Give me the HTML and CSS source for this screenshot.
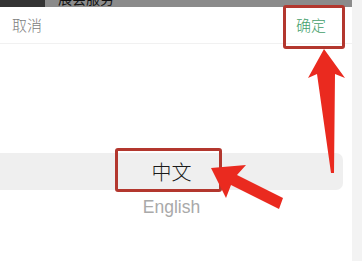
FILE: index.html
```html
<!DOCTYPE html>
<html lang="zh">
<head>
<meta charset="utf-8">
<link rel="stylesheet" href="styles.css">
</head>
<body>
<div class="page">
  <div class="main">
    <div class="topstrip">
      <div class="topstrip-dark"></div>
      <div class="topstrip-title">展会服务</div>
    </div>
    <div class="header">
      <span class="btn cancel">取消</span>
      <span class="btn ok">确定</span>
    </div>
    <div class="picker">
      <div class="band">中文</div>
      <div class="option">English</div>
    </div>
  </div>
  <div class="side"></div>

  <div class="mark mark-ok"></div>
  <div class="mark mark-zh"></div>
  <svg class="arrows" width="362" height="261" viewBox="0 0 362 261">
    <polygon points="324,49 345,78 335,74 334,173 331,173 317,74 308,78" fill="#ea2a1f"/>
    <polygon points="211,168 246,165 237,175 283,198 279,209 231,185 226,198" fill="#ea2a1f"/>
  </svg>
</div>
</body>
</html>
```
FILE: styles.css
```css
html, body {
  margin: 0;
  padding: 0;
  background: #ffffff;
}
.page {
  position: relative;
  width: 362px;
  height: 261px;
  overflow: hidden;
  display: flex;
  font-family: "Noto Sans CJK SC", "Liberation Sans", sans-serif;
}
.main {
  width: 352px;
  display: flex;
  flex-direction: column;
  background: #ffffff;
}
.side {
  width: 10px;
  background: #f3f3f3;
}
.topstrip {
  height: 7px;
  background: #8b8b8b;
  display: flex;
  overflow: hidden;
}
.topstrip-dark {
  width: 45px;
  background: #343434;
}
.topstrip-title {
  margin-left: 13px;
  margin-top: -9px;
  font-size: 14px;
  line-height: 14px;
  color: #111;
}
.header {
  height: 36px;
  border-bottom: 1px solid #f1f1f1;
  display: flex;
  align-items: center;
  justify-content: space-between;
  padding: 0 26px 0 12px;
}
.btn {
  font-size: 15px;
  line-height: 20px;
  font-weight: 300;
}
.cancel {
  color: #7d7d7d;
}
.ok {
  color: #45a06a;
}
.picker {
  padding-top: 109px;
  width: 343px;
}
.band {
  height: 37px;
  background: #efefef;
  border-radius: 0 7px 7px 0;
  display: flex;
  align-items: center;
  justify-content: center;
  font-size: 20px;
  font-weight: 300;
  color: #1a1a1a;
}
.option {
  margin-top: 6px;
  text-align: center;
  font-family: "Liberation Sans", sans-serif;
  font-size: 17.5px;
  line-height: 22px;
  color: #a9a9a9;
}
.mark {
  position: absolute;
  border: 3px solid #b3372e;
  border-radius: 3px;
  box-sizing: border-box;
}
.mark-ok {
  left: 283px;
  top: 5px;
  width: 62px;
  height: 44px;
}
.mark-zh {
  left: 115px;
  top: 148px;
  width: 107px;
  height: 44px;
}
.arrows {
  position: absolute;
  left: 0;
  top: 0;
  pointer-events: none;
}
```
